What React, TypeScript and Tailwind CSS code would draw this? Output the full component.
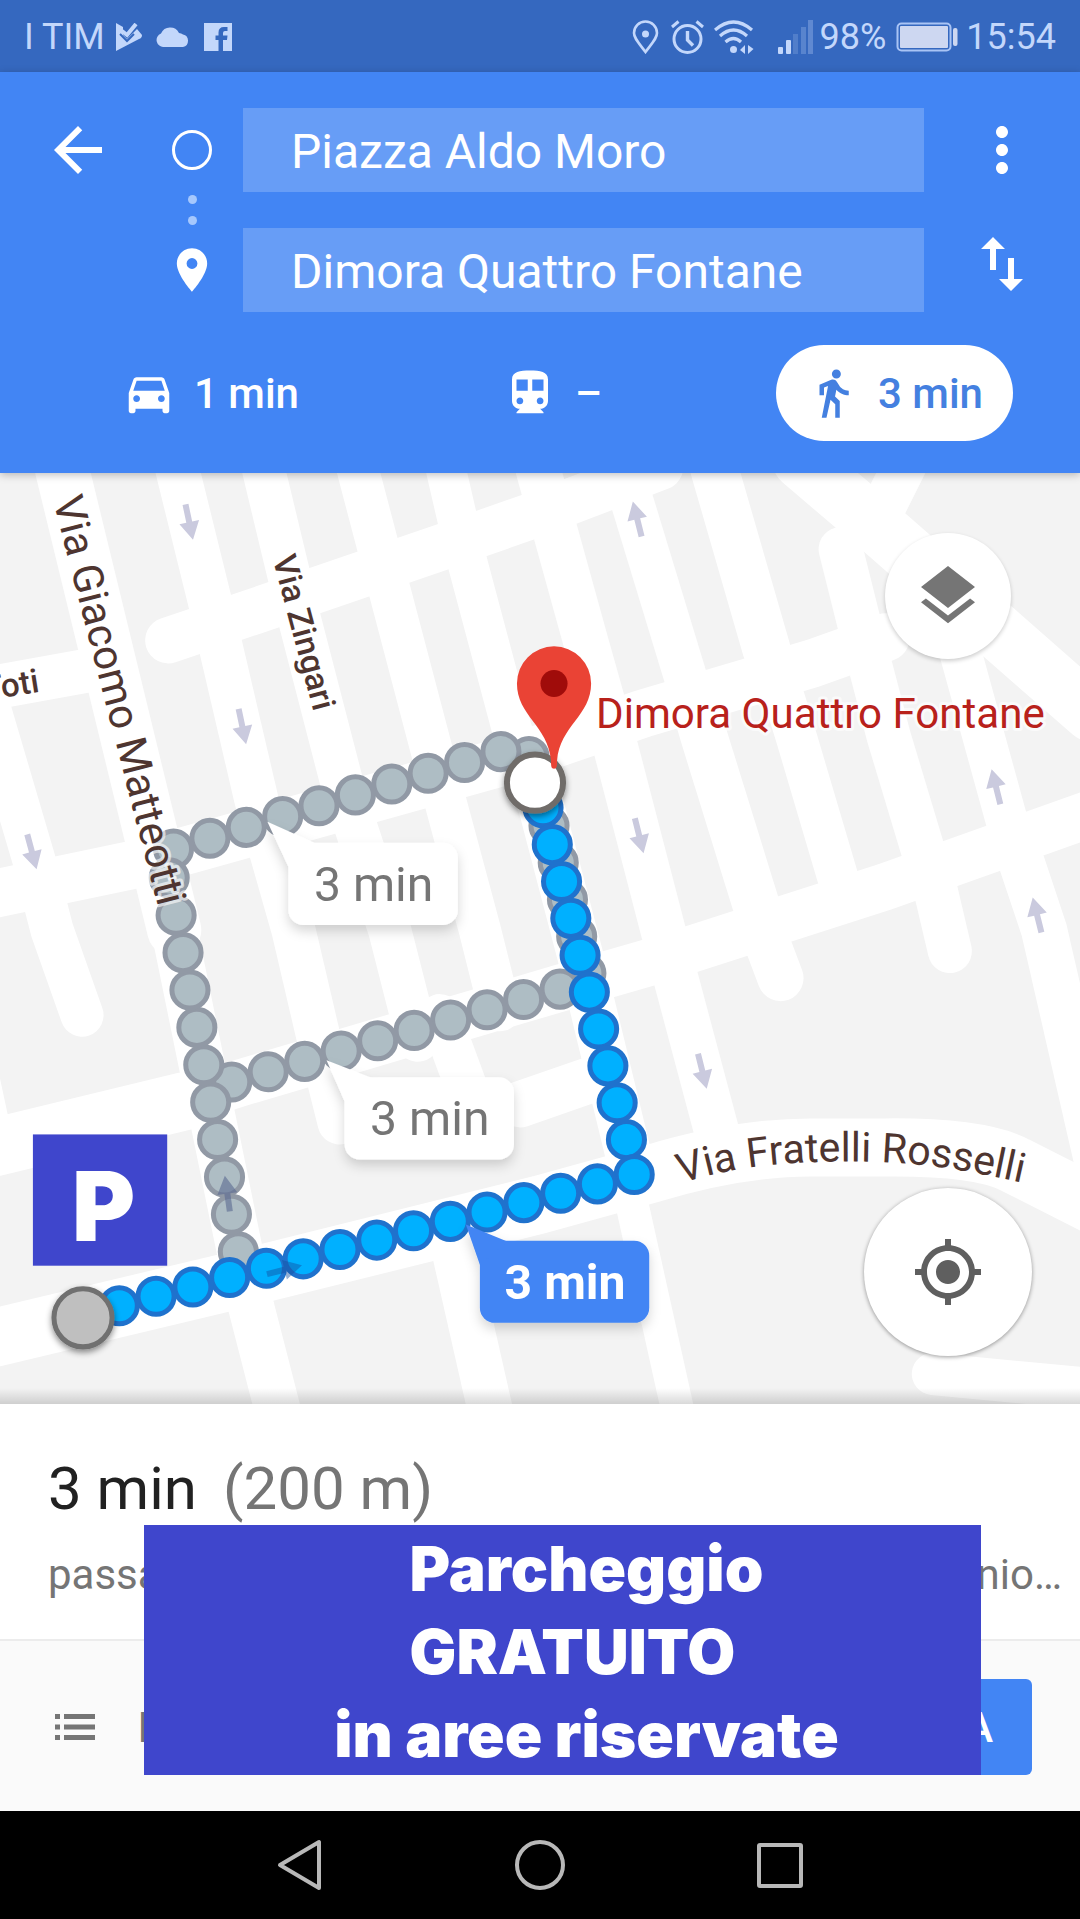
import React from "react";
import {
  MdArrowBack,
  MdMoreVert,
  MdPlace,
  MdImportExport,
  MdDirectionsCar,
  MdDirectionsSubway,
  MdDirectionsWalk,
  MdLayers,
  MdMyLocation,
} from "react-icons/md";

type Point = [number, number];

/* ---------- status bar ---------- */

function StatusBar() {
  return (
    <div className="flex h-18 items-center bg-[#3568bf] px-6 pt-0.5 text-[36px] leading-[42px] text-[#c3d7fb]">
      <span>I TIM</span>
      <svg viewBox="0 0 27 28" className="ml-2.5 h-7 w-[27px]" fill="currentColor" aria-hidden="true">
        <path d="M1 0 L8 4 V12 L12 16 L22 6 L27 12 Q27 15 24 16 L1 28 Z" />
        <path d="M7 8 L12 12 L21 1" fill="none" stroke="currentColor" strokeWidth="4" />
        <path d="M5 11 L12 18 L19 11" fill="none" stroke="#3568bf" strokeWidth="2" />
      </svg>
      <svg viewBox="0 0 34 20" className="ml-3.5 h-5 w-[34px]" fill="currentColor" aria-hidden="true">
        <path d="M8 20 A7 7 0 0 1 5 6.500 A10 10 0 0 1 23 6 A7 7 0 0 1 27 7.500 A6.400 6.400 0 0 1 27 20 Z" />
      </svg>
      <svg viewBox="0 0 28 28" className="ml-3.5 h-7 w-7" fill="currentColor" aria-hidden="true">
        <path d="M0 0 H28 V28 H19 V17 H23 L23.500 12.500 H19 V10 Q19 8 21 8 H23.500 V4 H20 Q14.500 4 14.500 9.500 V12.500 H11.500 V17 H14.500 V28 H0 Z" />
      </svg>
      <div className="ml-auto flex items-center">
        <svg viewBox="0 0 27 34" className="h-[34px] w-[27px]" aria-hidden="true">
          <path d="M13.500 32 C6 22 2 18 2 13 A11.500 11.500 0 0 1 25 13 C25 18 21 22 13.500 32 Z" fill="none" stroke="currentColor" strokeWidth="2.600" />
          <circle cx="13.500" cy="14" r="3.500" fill="currentColor" />
        </svg>
        <svg viewBox="0 0 33 34" className="ml-3 h-[34px] w-[33px]" fill="none" stroke="currentColor" strokeWidth="3" aria-hidden="true">
          <circle cx="16.500" cy="19" r="13.500" />
          <path d="M16.500 11 V20 L22 25.500" strokeWidth="3.400" />
          <path d="M1 7 L7.500 1.500 M32 7 L25.500 1.500" />
        </svg>
        <svg viewBox="0 0 40 34" className="ml-2.5 h-[34px] w-10" fill="none" stroke="currentColor" strokeWidth="3.200" aria-hidden="true">
          <path d="M1 10 Q19.500 -6 38 10" />
          <path d="M6 16 Q19.500 4 33 16" />
          <path d="M11.500 22 Q19.500 15 27 22" />
          <circle cx="19.500" cy="29.500" r="3.500" fill="currentColor" stroke="none" />
          <path d="M31 25 V34 L26 30 Z M34 25 V34 L39.500 29 Z" fill="currentColor" stroke="none" />
        </svg>
        <svg viewBox="0 0 36 34" className="ml-6 h-[34px] w-9" fill="currentColor" aria-hidden="true">
          <rect x="0" y="27" width="5" height="7" rx="1" />
          <rect x="8" y="20" width="5" height="14" rx="1" />
          <rect x="15" y="14" width="5" height="20" opacity="0.200" />
          <rect x="23" y="7" width="5" height="27" opacity="0.250" />
          <rect x="30" y="0" width="5" height="34" opacity="0.300" />
        </svg>
        <span className="ml-1.5">98%</span>
        <svg viewBox="0 0 62 30" className="ml-2.5 h-[30px] w-[62px]" aria-hidden="true">
          <rect x="1.500" y="1.500" width="53" height="27" rx="4" fill="none" stroke="#a9c4f5" strokeWidth="2" />
          <rect x="4" y="4" width="48" height="22" rx="1" fill="#cdd7f1" />
          <rect x="57" y="6" width="4.500" height="18" rx="2" fill="#cdd7f1" />
        </svg>
        <span className="ml-2">15:54</span>
      </div>
    </div>
  );
}

/* ---------- directions header ---------- */

const fieldClass =
  "ml-[15px] h-[84px] min-w-0 bg-white/20 px-12 pt-0.5 text-[48px] text-white outline-none";

function DirectionsHeader() {
  return (
    <header className="relative z-10 bg-[#4285f4] pt-9 pb-8 text-white shadow-[0_2px_8px_rgba(0,0,0,0.25)]">
      <form className="grid grid-cols-[156px_72px_1fr_156px] items-center" onSubmit={(e) => e.preventDefault()}>
        <button type="button" aria-label="Indietro" className="justify-self-center">
          <MdArrowBack className="size-18" />
        </button>
        <span className="size-10 justify-self-center rounded-full border-3 border-white" />
        <input aria-label="Partenza" defaultValue="Piazza Aldo Moro" className={fieldClass} />
        <button type="button" aria-label="Altre opzioni" className="justify-self-center">
          <MdMoreVert className="size-18" />
        </button>

        <div className="col-start-2 flex h-9 flex-col items-center justify-center gap-3">
          <span className="size-[9px] rounded-full bg-[#a6c8fd]" />
          <span className="size-[9px] rounded-full bg-[#a6c8fd]" />
        </div>

        <MdPlace className="col-start-2 size-[52px] justify-self-center" />
        <input aria-label="Destinazione" defaultValue="Dimora Quattro Fontane" className={fieldClass} />
        <button type="button" aria-label="Inverti" className="self-start justify-self-center">
          <MdImportExport className="size-18" />
        </button>
      </form>

      <nav className="mt-[33px] flex justify-between pr-[67px] pl-[92px] text-[42px] font-medium">
        <button type="button" className="flex h-24 items-center gap-[18px] rounded-full px-[30px]">
          <MdDirectionsCar className="size-[54px]" />
          1 min
        </button>
        <button type="button" className="flex h-24 items-center gap-[18px] rounded-full px-[30px]">
          <MdDirectionsSubway className="size-[54px]" />–
        </button>
        <button type="button" className="flex h-24 items-center gap-[18px] rounded-full bg-white px-[30px] text-[#4480e0]">
          <MdDirectionsWalk className="size-[54px]" />
          3 min
        </button>
      </nav>
    </header>
  );
}

/* ---------- map ---------- */

const roads: { d: string; w: number }[] = [
  // streets running north to south
  { d: "M63 470 L175 930", w: 54 },
  { d: "M175 930 L252 1307 L279 1412", w: 46 },
  { d: "M178 470 L215 620 L257 800 L294 930 L322 1050 L340 1122", w: 44 },
  { d: "M264 470 L300 620 L344 790 L390 930 L418 1040", w: 43 },
  { d: "M440 1015 L475 1110", w: 42 },
  { d: "M358 470 L433 755 L480 930 L500 1010", w: 42 },
  { d: "M446 470 L468 565 L512 730 L535 800", w: 40 },
  { d: "M538 470 L585 640 L616 750 L664 935 L716 1130", w: 45 },
  { d: "M622 470 L685 677", w: 43 },
  { d: "M714 470 L766 650", w: 48 },
  { d: "M690 690 L703 735 L755 903", w: 47 },
  { d: "M778 680 L795 735 L837 877", w: 41 },
  { d: "M840 550 L860 630 L888 737 L922 850", w: 44 },
  { d: "M950 620 L962 662 L1006 822", w: 42 },
  { d: "M535 783 L580 955 L632 1170", w: 46 },
  { d: "M631 1200 L678 1412", w: 33 },
  { d: "M452 1240 L491 1412", w: 45 },
  { d: "M-15 690 L35 860 L53 930 L83 1015", w: 43 },
  { d: "M760 925 L780 978", w: 46 },
  { d: "M930 870 L949 951", w: 44 },
  { d: "M1021 864 L1043 930 L1098 1170", w: 46 },
  { d: "M-12 1055 L3 1125", w: 16 },
  { d: "M1092 1300 L1086 1380", w: 16 },
  // streets running west to east
  { d: "M169 641 L255 612 L448 546 L540 514 L660 468", w: 46 },
  { d: "M-10 689 L95 670", w: 44 },
  { d: "M-10 895 L143 863 L500 763 L643 714 L812 664 L885 638", w: 48 },
  { d: "M-5 1147 L185 1101", w: 58 },
  { d: "M185 1101 L233 1085 L560 988 L657 960 L884 887 L1095 812", w: 47 },
  { d: "M520 1104 L595 1078", w: 46 },
  { d: "M-5 1337 L230 1281 L540 1204 L652 1173 Q738 1147 810 1147 L884 1147 Q980 1146 1015 1165 L1090 1203", w: 58 },
  { d: "M932 1373 L1090 1388", w: 42 },
  // diagonal avenues
  { d: "M800 462 L880 530 L1090 714", w: 56 },
  { d: "M907 460 L872 530", w: 44 },
];

const oneWayArrows: { x: number; y: number; r: number }[] = [
  { x: 190, y: 523, r: 168 },
  { x: 243, y: 727, r: 168 },
  { x: 33, y: 852, r: 165 },
  { x: 639, y: 836, r: 166 },
  { x: 702, y: 1071, r: 166 },
  { x: 637, y: 520, r: -14 },
  { x: 995, y: 787, r: -14 },
  { x: 1036, y: 915, r: -14 },
];

function line(x: number, y: number, dx: number, dy: number, n: number): Point[] {
  return Array.from({ length: n }, (_, i) => [x + dx * i, y + dy * i] as Point);
}

const greyDots: Point[] = [
  ...line(549, 826, 9.2, 36.8, 5),
  ...line(560, 989, -36.4, 10.3, 10),
  [529, 757],
  ...line(501, 752, -36.3, 10.8, 10),
  ...line(239, 1251, -6.9, -37.3, 11),
];

const blueDots: Point[] = [
  ...line(543, 808, 9.25, 36.8, 10),
  ...line(634, 1174, -36.7, 9.35, 15),
];

function Dots({ points, fill, stroke }: { points: Point[]; fill: string; stroke: string }) {
  return (
    <g fill={fill} stroke={stroke} strokeWidth="5">
      {points.map(([x, y], i) => (
        <circle key={i} cx={x} cy={y} r="18" />
      ))}
    </g>
  );
}

function Arrow({ x, y, r, fill }: { x: number; y: number; r: number; fill: string }) {
  return (
    <path
      d="M0 -18 L10 0 H3 V18 H-3 V0 H-10 Z"
      transform={`translate(${x} ${y}) rotate(${r})`}
      fill={fill}
    />
  );
}

function Bubble({ x, y, tip, active = false }: { x: number; y: number; tip: Point; active?: boolean }) {
  return (
    <g>
      <g fill={active ? "#4285f4" : "#ffffff"} filter="url(#bubbleShadow)">
        <rect x={x} y={y} width="169" height="82" rx="15" />
        <path d={`M${tip[0]} ${tip[1]} L${x + 28} ${y + 1} L${x} ${y + 24} Z`} />
      </g>
      <text
        x={x + 85}
        y={y + 58}
        textAnchor="middle"
        fontSize="48"
        fontWeight={active ? 700 : 400}
        fill={active ? "#ffffff" : "#757575"}
      >
        3 min
      </text>
    </g>
  );
}

function MapDrawing() {
  return (
    <svg
      viewBox="0 474 1080 929"
      preserveAspectRatio="xMidYMid slice"
      className="absolute inset-0 h-full w-full"
      role="img"
      aria-label="Mappa del percorso"
    >
      <defs>
        <filter id="bubbleShadow" x="-20%" y="-20%" width="140%" height="160%">
          <feDropShadow dx="0" dy="6" stdDeviation="6" floodOpacity="0.16" />
        </filter>
        <filter id="markerShadow" x="-30%" y="-30%" width="160%" height="170%">
          <feDropShadow dx="0" dy="3" stdDeviation="3" floodOpacity="0.45" />
        </filter>
        <path id="rosselli" d="M681 1183 C735 1165 790 1161 850 1161 S960 1167 1050 1189" />
      </defs>
      <rect x="0" y="474" width="1080" height="929" fill="#f3f3f3" />
      <g fill="none" stroke="#ffffff" strokeLinecap="round" strokeLinejoin="round">
        {roads.map((road) => (
          <path key={road.d} d={road.d} strokeWidth={road.w} />
        ))}
      </g>
      {oneWayArrows.map((a) => (
        <Arrow key={`${a.x}-${a.y}`} x={a.x} y={a.y} r={a.r} fill="#cacade" />
      ))}

      <Dots points={greyDots} fill="#aebdc4" stroke="#9199a5" />
      <Dots points={blueDots} fill="#00b0ff" stroke="#1f72cd" />
      <Arrow x={228} y={1193} r={-8} fill="rgba(90,105,145,0.6)" />
      <Arrow x={285} y={1269} r={76} fill="rgba(20,80,160,0.45)" />

      <g
        fill="#4e3530"
        stroke="#ffffff"
        strokeOpacity="0.6"
        strokeWidth="6"
        strokeLinejoin="round"
        style={{ paintOrder: "stroke" }}
      >
        <text fontSize="42" transform="translate(54 501) rotate(75.5)">Via Giacomo Matteotti</text>
        <text fontSize="33" fontWeight="500" transform="translate(273 559) rotate(75)">Via Zingari</text>
        <text fontSize="33" fontWeight="500" transform="translate(-14 701) rotate(-9)">Toti</text>
        <text fontSize="41">
          <textPath href="#rosselli">Via Fratelli Rosselli</textPath>
        </text>
        <text x="596" y="728" fontSize="42" fill="#b8211b">Dimora Quattro Fontane</text>
      </g>

      <circle cx="535" cy="783" r="28" fill="#ffffff" stroke="#6f6c69" strokeWidth="6" filter="url(#markerShadow)" />
      <circle cx="84" cy="1317" r="29" fill="#bfbfbf" stroke="#6f6f6f" strokeWidth="5" filter="url(#markerShadow)" />
      <path
        d="M554 769 C551 769 551 766 551 761 C548 726 517 716 517 684 A37 37 0 0 1 591 684 C591 716 560 726 557 761 C557 766 557 769 554 769 Z"
        fill="#ea4335"
      />
      <circle cx="554" cy="684" r="13.500" fill="#a00c0a" />

      <Bubble x={289} y={843} tip={[268, 822]} />
      <Bubble x={345} y={1077} tip={[327, 1060]} />
      <Bubble x={480} y={1240} tip={[466, 1224]} active />

      <rect x="34" y="1134" width="134" height="131" fill="#3f46cc" />
      <text x="73" y="1240" fontSize="96" fontWeight="900" fill="#ffffff" fontFamily="Inter, sans-serif">P</text>
    </svg>
  );
}

function MapView() {
  return (
    <main className="relative min-h-[600px] flex-1 overflow-hidden bg-[#f3f3f3]">
      <MapDrawing />
      <div className="absolute inset-x-0 bottom-0 h-4 bg-linear-to-t from-black/15 to-transparent" />
      <div className="absolute top-[60px] right-12 bottom-12 flex flex-col items-center justify-between">
        <button
          type="button"
          aria-label="Livelli"
          className="flex size-[126px] items-center justify-center rounded-full bg-white text-[#757575] shadow-[0_2px_4px_rgba(0,0,0,0.2)]"
        >
          <MdLayers className="size-18" />
        </button>
        <button
          type="button"
          aria-label="La mia posizione"
          className="flex size-42 items-center justify-center rounded-full bg-white text-[#5f5f5f] shadow-[0_1px_4px_rgba(0,0,0,0.4)]"
        >
          <MdMyLocation className="size-18" />
        </button>
      </div>
    </main>
  );
}

/* ---------- bottom sheet ---------- */

function RouteSheet() {
  return (
    <section className="relative bg-white">
      <div className="border-b-2 border-[#ececec] pt-[49px] pr-[18px] pb-10 pl-12 text-[#757575]">
        <h1 className="flex gap-[26px] text-[60px] leading-[72px]">
          <span className="text-[#212121]">3 min</span>
          <span>(200 m)</span>
        </h1>
        <p className="mt-[26px] flex justify-between text-[42px] leading-[48px]">
          <span>passa</span>
          <span>nio…</span>
        </p>
      </div>
      <div className="flex items-center justify-between bg-[#fafafa] pt-[38px] pr-12 pb-9 pl-[54px] text-[42px] font-medium">
        <button type="button" className="flex items-center gap-[42px] text-[#757575]">
          <svg viewBox="0 0 42 28" className="h-7 w-[42px]" fill="currentColor" aria-hidden="true">
            <path d="M1 1h5v5H1z M1 11.500h5v5H1z M1 22h5v5H1z M10 1h31v5H10z M10 11.500h31v5H10z M10 22h31v5H10z" />
          </svg>
          E
        </button>
        <button type="button" className="h-24 rounded-md bg-[#4285f4] px-[39px] text-white">
          AVVIA
        </button>
      </div>

      <div className="absolute top-[121px] right-[99px] bottom-9 left-36 bg-[#3f46cc] pt-0.5 pl-12 text-center font-['Inter',sans-serif] text-[62px] leading-[83px] font-black text-white">
        <div className="mx-auto w-fit text-left">
          Parcheggio
          <br />
          GRATUITO
        </div>
        in aree riservate
      </div>
    </section>
  );
}

/* ---------- system navigation ---------- */

function SystemNav() {
  return (
    <footer className="flex h-27 items-center justify-center gap-45 bg-black text-[#b8b8b8]">
      <button type="button" aria-label="Indietro">
        <svg viewBox="0 0 60 60" className="size-15" fill="none" stroke="currentColor" strokeWidth="4" strokeLinejoin="round">
          <path d="M49 7 V53 L10 30 Z" />
        </svg>
      </button>
      <button type="button" aria-label="Home">
        <svg viewBox="0 0 60 60" className="size-15" fill="none" stroke="currentColor" strokeWidth="4">
          <circle cx="30" cy="30" r="23" />
        </svg>
      </button>
      <button type="button" aria-label="Recenti">
        <svg viewBox="0 0 60 60" className="size-15" fill="none" stroke="currentColor" strokeWidth="4" strokeLinejoin="round">
          <rect x="9" y="10" width="42" height="41" rx="1" />
        </svg>
      </button>
    </footer>
  );
}

export default function App() {
  return (
    <div className="flex min-h-screen flex-col bg-white font-['Roboto',sans-serif]">
      <StatusBar />
      <DirectionsHeader />
      <MapView />
      <RouteSheet />
      <SystemNav />
    </div>
  );
}
